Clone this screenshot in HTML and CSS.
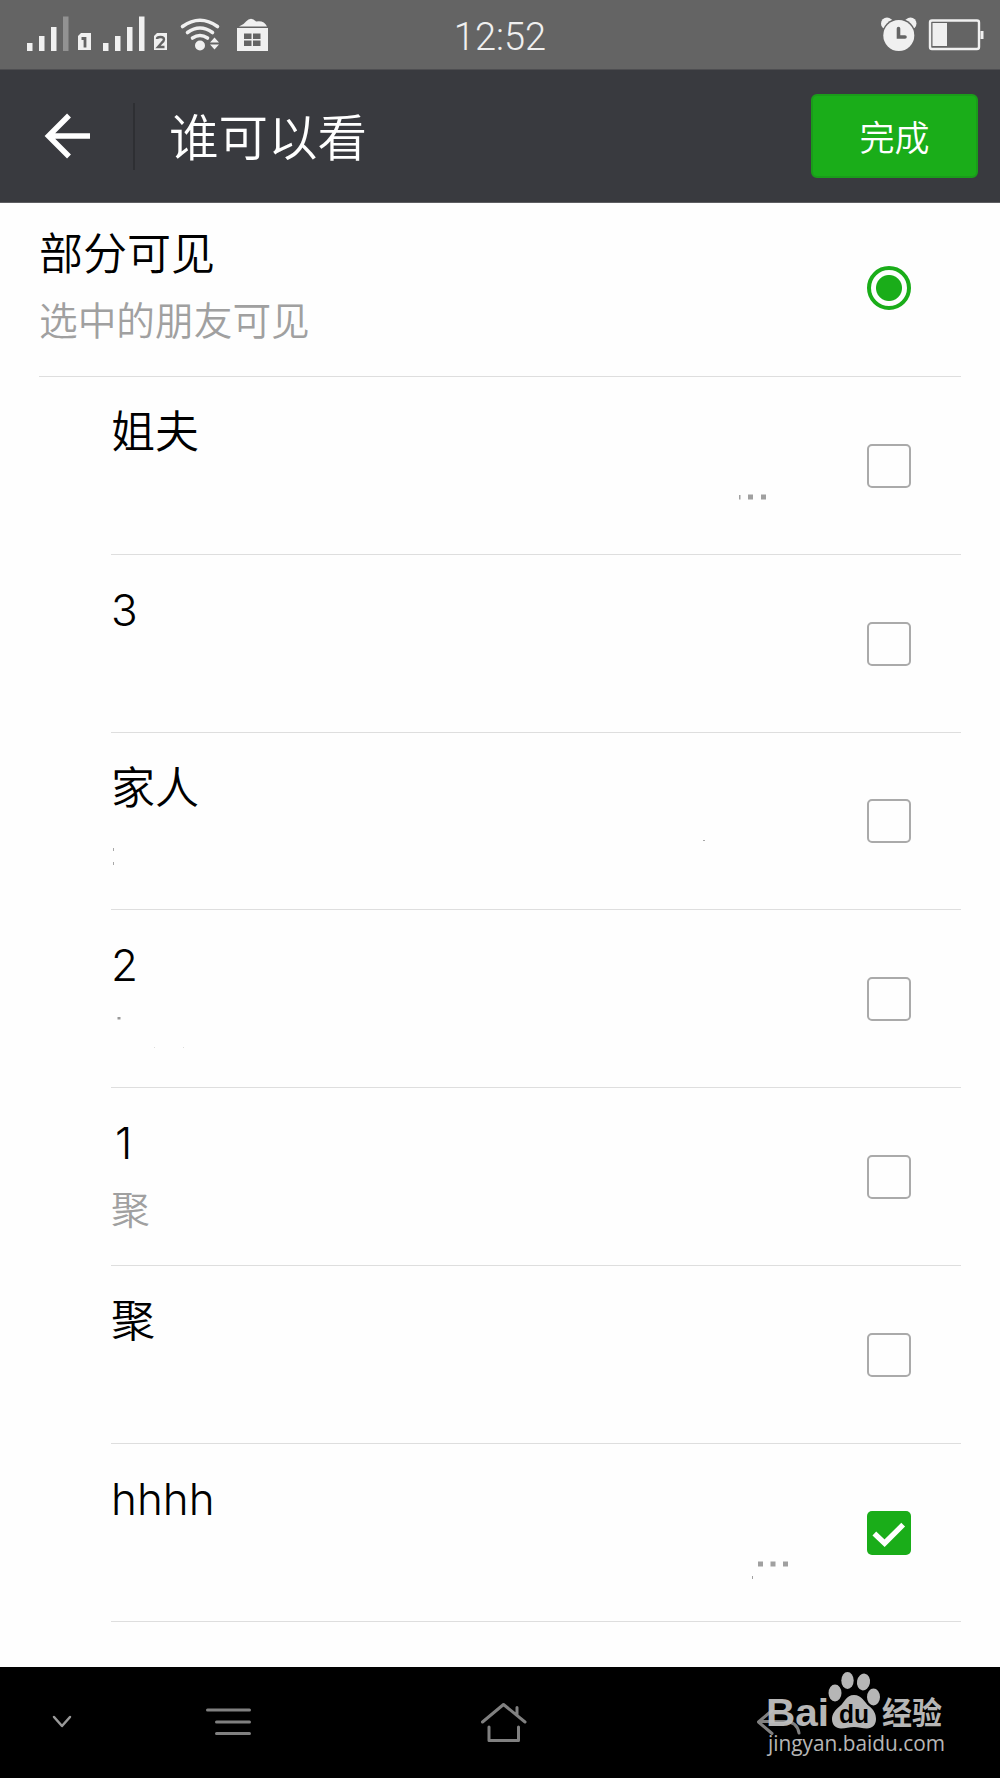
FILE: index.html
```html
<!DOCTYPE html>
<html lang="zh-CN">
<head>
    <meta charset="UTF-8">
    <meta name="viewport" content="width=device-width, initial-scale=1.0">
    <title>谁可以看</title>
    <link rel="stylesheet" href="styles.css">
</head>
<body>
    <div class="status-bar">
        <svg class="status-left" width="290" height="69" viewBox="0 0 290 69" fill="#f0f0f0">
            <!-- SIM 1 -->
            <rect x="27" y="43" width="5.5" height="8"/>
            <rect x="39" y="36" width="5.5" height="15"/>
            <rect x="51" y="27" width="5.5" height="24"/>
            <rect x="63" y="16.5" width="5.5" height="34.5" fill="#929292"/>
            <path d="M81 33h10v17H78V36z"/>
            <path d="M81.5 38.500h3.500v9" fill="none" stroke="#646464" stroke-width="2.8"/>
            <!-- SIM 2 -->
            <rect x="103" y="43" width="5.5" height="8"/>
            <rect x="115" y="36" width="5.5" height="15"/>
            <rect x="127" y="27" width="5.5" height="24"/>
            <rect x="139" y="16.5" width="5.5" height="34.5"/>
            <path d="M157 33h10v17h-13V36z"/>
            <path d="M157 39q0-2 3.500-2t3.500 2.500q0 1.500-2.500 3.500l-3.500 4h6.500" fill="none" stroke="#646464" stroke-width="2.4"/>
            <!-- wifi -->
            <g fill="none" stroke="#f0f0f0" stroke-width="3.6" stroke-linecap="round">
                <path d="M182.500 26.500q17.500-12.500 35 0"/>
                <path d="M187.500 32.500q12.500-9 25 0"/>
                <path d="M192.500 38q7.500-5 15 0"/>
            </g>
            <circle cx="200" cy="45.5" r="5"/>
            <path d="M210 42.500l4.500-5 4.500 5zM210 44.500l4.500 5 4.500-5z"/>
            <!-- app shop -->
            <path d="M239 26.500q5-2 7-5 5-5.500 10 0 8-1.500 11 5z"/>
            <path d="M237 28h31v23h-31z"/>
            <path d="M244 33.500h7.500v5.500H244zM253 33.500h7.500v5.500H253zM244 40.500h7.500v5.500H244zM253 40.500h7.500v5.500H253z" fill="#646464"/>
        </svg>
        <div class="clock">12:52</div>
        <svg class="status-right" width="120" height="69" viewBox="0 0 120 69" fill="#f0f0f0">
            <circle cx="7" cy="23.5" r="6"/>
            <circle cx="30.5" cy="23.5" r="6"/>
            <ellipse cx="18.8" cy="35.5" rx="17" ry="17" fill="#646464"/>
            <ellipse cx="18.8" cy="35.5" rx="15.5" ry="15.5"/>
            <path d="M18.500 28.500v8.500h6.500" fill="none" stroke="#646464" stroke-width="3.6" stroke-linecap="round"/>
            <rect x="50" y="20.5" width="49" height="28.5" rx="2" fill="none" stroke="#f0f0f0" stroke-width="2.4"/>
            <rect x="52.5" y="23" width="14.5" height="23"/>
            <rect x="100.5" y="31" width="3" height="8"/>
        </svg>
    </div>

    <div class="header">
        <svg class="back" width="46" height="46" viewBox="0 0 46 46" fill="none" stroke="#fff" stroke-width="5.5">
            <path d="M46 23H5M25 2.500L4.500 23 25 43.500"/>
        </svg>
        <div class="separator"></div>
        <h1>谁可以看</h1>
        <button class="done">完成</button>
    </div>

    <div class="list">
        <div class="row group">
            <div class="text">
                <div class="name">部分可见</div>
                <div class="sub">选中的朋友可见</div>
            </div>
            <span class="radio"></span>
        </div>
        <div class="row">
            <div class="text"><div class="name">姐夫</div></div>
            <span class="checkbox"></span>
            <svg class="marks" width="1000" height="177" fill="#a0a0a0">
                <path d="M739 118h1.500v4.500H739zM748 117.500h5v5h-5zM761 117.500h5v5h-5z"/>
            </svg>
        </div>
        <div class="row">
            <div class="text"><div class="name latin">3</div></div>
            <span class="checkbox"></span>
        </div>
        <div class="row">
            <div class="text"><div class="name">家人</div></div>
            <span class="checkbox"></span>
            <svg class="marks" width="1000" height="177" fill="#a8a8a8">
                <path d="M113 115h1v3h-1zM113 129h1v3h-1zM703 107h2v1h-2z"/>
            </svg>
        </div>
        <div class="row">
            <div class="text"><div class="name latin">2</div></div>
            <span class="checkbox"></span>
            <svg class="marks" width="1000" height="177" fill="#999">
                <path d="M117.500 107h3v2.500h-3z"/>
                <path d="M154 137h1v1h-1zM183 137h1v1h-1z" fill="#ddd"/>
            </svg>
        </div>
        <div class="row">
            <div class="text">
                <div class="name latin narrow">1</div>
                <div class="sub">聚</div>
            </div>
            <span class="checkbox"></span>
        </div>
        <div class="row">
            <div class="text"><div class="name">聚</div></div>
            <span class="checkbox"></span>
        </div>
        <div class="row">
            <div class="text"><div class="name latin">hhhh</div></div>
            <span class="checkbox checked">
                <svg width="44" height="44" viewBox="0 0 45 45" fill="none" stroke="#fff" stroke-width="5.5">
                    <path d="M7.500 23L18 33 37 14"/>
                </svg>
            </span>
            <svg class="marks" width="1000" height="177" fill="#a0a0a0">
                <path d="M758 117.500h5v5h-5zM770.500 117.500h5v5h-5zM783 117.500h5v5h-5zM752 132h1v3h-1z"/>
            </svg>
        </div>
    </div>

    <div class="nav-bar">
        <svg width="1000" height="111" viewBox="0 1667 1000 111" fill="none" stroke="#808080" stroke-width="3" stroke-linecap="round" stroke-linejoin="round">
            <path d="M54 1717l8 9 8-9" stroke="#999" stroke-width="2.5"/>
            <path d="M207.500 1710H249.500M216.500 1722H249.500M216.500 1733.500H249.500"/>
            <path d="M482.500 1722L503.500 1704.500 525 1722M517 1707.500v7.500M489 1727v13.500h29.500V1727"/>
            <path d="M772 1710.500L758.500 1722l13.500 11.500M759 1721.500h26q12 0 14 11.500"/>
            <!-- watermark -->
            <g class="watermark" fill="#c0c0c0" stroke="none">
                <text class="wm-bai" x="766" y="1726" textLength="63" lengthAdjust="spacingAndGlyphs">Bai</text>
                <ellipse cx="835" cy="1693" rx="6.5" ry="8.5"/>
                <ellipse cx="847.5" cy="1680.5" rx="6.2" ry="8.5"/>
                <ellipse cx="863.5" cy="1682" rx="6.5" ry="8.5" transform="rotate(10 863.5 1682)"/>
                <ellipse cx="873.5" cy="1697" rx="6.5" ry="8.5"/>
                <path d="M854 1695c8 0 10 7 15 11s7 8 7 13c0 6-4 9.500-9 9.500-5 0-8-1.500-13-1.500s-8 1.500-13 1.500c-5 0-9-3.500-9-9.500 0-5 3-9 8-13s6-11 14-11z"/>
                <text class="wm-du" x="839" y="1722.5" textLength="30" lengthAdjust="spacingAndGlyphs" fill="#000">du</text>
                <text class="wm-cn" x="882" y="1724" textLength="60" lengthAdjust="spacingAndGlyphs">经验</text>
                <text class="wm-url" x="768" y="1750.5" textLength="177" lengthAdjust="spacingAndGlyphs">jingyan.baidu.com</text>
            </g>
        </svg>
    </div>
</body>
</html>
```
FILE: styles.css
```css
* {
    box-sizing: border-box;
}
body {
    margin: 0;
    width: 1000px;
    height: 1778px;
    display: flex;
    flex-direction: column;
    background: #fdfdfd;
    font-family: "Noto Sans CJK SC", sans-serif;
    overflow: hidden;
}
svg {
    display: block;
}
.status-bar {
    height: 70px;
    display: grid;
    grid-template-columns: 1fr 100px 1fr;
    background: #646464;
    border-bottom: 1px solid #4e4e51;
}
.clock {
    font-family: Roboto, sans-serif;
    font-size: 38px;
    font-weight: 350;
    line-height: 74px;
    text-align: center;
    color: #f0f0f0;
}
.status-right {
    justify-self: end;
}
.header {
    height: 133px;
    display: flex;
    align-items: center;
    padding: 0 22px 0 44px;
    background: #393a3f;
    border-bottom: 1px solid #5e5e62;
}
.separator {
    width: 2px;
    height: 67px;
    margin: 0 34px 0 43px;
    background: #2e2f33;
}
h1 {
    flex: 1;
    margin: 0;
    padding-bottom: 2px;
    font-size: 49.5px;
    font-weight: 350;
    line-height: 70px;
    color: #fff;
}
.done {
    width: 167px;
    height: 84px;
    padding: 0 0 2px;
    border: 2px solid #1a9c1a;
    border-radius: 6px;
    background: #1aad19;
    color: #fff;
    font-family: inherit;
    font-size: 35px;
    font-weight: 350;
}
.list {
    flex: 1;
    background: #fefefe;
}
.row {
    position: relative;
    height: 177.8px;
    margin: 0 39px 0 111px;
    padding: 1px 50px 0 0;
    display: flex;
    align-items: center;
    justify-content: space-between;
    border-bottom: 1px solid #dedede;
}
.group {
    height: 174px;
    margin-left: 39px;
    padding: 0 50px 4px 0;
}
.text {
    align-self: flex-start;
    padding-top: 21px;
}
.group .text {
    padding-top: 18px;
}
.name {
    height: 60px;
    font-size: 44px;
    font-weight: 350;
    line-height: 60px;
    color: #000;
}
.latin {
    font-family: Inter, sans-serif;
    font-weight: 350;
    line-height: 66px;
}
.narrow {
    padding-left: 4px;
}
.sub {
    margin-top: 8px;
    font-size: 38.7px;
    font-weight: 350;
    line-height: 58px;
    color: #a0a0a0;
}
.radio {
    width: 44px;
    height: 44px;
    border: 4px solid #1aad19;
    border-radius: 50%;
    background: radial-gradient(circle, #1aad19 12.5px, transparent 13.5px);
}
.checkbox {
    width: 44px;
    height: 44px;
    border: 2.5px solid #aaa;
    border-radius: 5px;
}
.checked {
    border: none;
    background: #1aad19;
}
.marks {
    position: absolute;
    top: 0;
    left: -111px;
}
.nav-bar {
    height: 111px;
    background: #000;
}
.watermark {
    opacity: 0.95;
}
.wm-bai {
    font: bold 39px "Liberation Sans", sans-serif;
}
.wm-du {
    font: bold 26px "Liberation Sans", sans-serif;
}
.wm-cn {
    font: bold 31px "Noto Sans CJK SC", sans-serif;
}
.wm-url {
    font: 21px "Open Sans", sans-serif;
}
```
